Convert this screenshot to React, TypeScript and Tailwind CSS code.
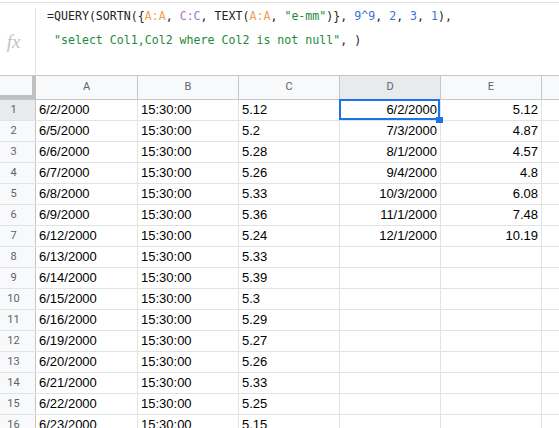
import React from "react";

const colA = [
  "6/2/2000", "6/5/2000", "6/6/2000", "6/7/2000", "6/8/2000", "6/9/2000", "6/12/2000", "6/13/2000",
  "6/14/2000", "6/15/2000", "6/16/2000", "6/19/2000", "6/20/2000", "6/21/2000", "6/22/2000", "6/23/2000",
];
const colC = ["5.12", "5.2", "5.28", "5.26", "5.33", "5.36", "5.24", "5.33", "5.39", "5.3", "5.29", "5.27", "5.26", "5.33", "5.25", "5.15"];
const colD = ["6/2/2000", "7/3/2000", "8/1/2000", "9/4/2000", "10/3/2000", "11/1/2000", "12/1/2000"];
const colE = ["5.12", "4.87", "4.57", "4.8", "6.08", "7.48", "10.19"];

const cell = "h-full border-r border-[#e2e3e3] flex items-center px-[3px] whitespace-nowrap overflow-hidden";

const orange = "text-[#f0a050]";
const purple = "text-[#a874d6]";
const green = "text-[#1e8a3c]";
const blue = "text-[#3d6fd6]";

const line1: [string, string][] = [
  ["=QUERY(SORTN({", ""],
  ["A:A", orange],
  [", ", ""],
  ["C:C", purple],
  [", TEXT(", ""],
  ["A:A", orange],
  [", ", ""],
  ['"e-mm"', green],
  [")}, ", ""],
  ["9^9", blue],
  [", ", ""],
  ["2", blue],
  [", ", ""],
  ["3", blue],
  [", ", ""],
  ["1", blue],
  ["),", ""],
];
const line2: [string, string][] = [
  [" ", ""],
  ['"select Col1,Col2 where Col2 is not null"', green],
  [", )", ""],
];

function FormulaBar() {
  return (
    <div className="h-[75px] pt-[2px]">
      <div className="h-[73px] border-t border-[#e0e0e0] flex">
        <div className="w-[35px] flex items-center justify-center pr-[8px] pt-[6px]">
          <span className="text-[19px] italic text-[#c4c4c4]" style={{ fontFamily: '"Liberation Serif", serif' }}>
            fx
          </span>
        </div>
        <div className="w-px bg-[#e0e0e0] mt-[5px] mb-[1px]" />
        <div
          className="pl-[11px] pt-[1px] text-[11.6px] leading-[24px] whitespace-pre text-[#222]"
          style={{ fontFamily: '"DejaVu Sans Mono", monospace' }}
        >
          {[line1, line2].map((ln, k) => (
            <div key={k}>
              {ln.map(([t, c], j) => (
                <span key={j} className={c}>
                  {t}
                </span>
              ))}
            </div>
          ))}
        </div>
      </div>
    </div>
  );
}

function HeaderRow() {
  const cols = [
    { l: "A", w: "w-[102px]", on: false },
    { l: "B", w: "w-[101px]", on: false },
    { l: "C", w: "w-[101px]", on: false },
    { l: "D", w: "w-[101px]", on: true },
    { l: "E", w: "w-[101px]", on: false },
  ];
  return (
    <div className="h-[25px] flex border-t border-b border-[#c4c7c5] bg-[#f8f9fa] text-[11px] text-[#5f6368]" style={{ fontFamily: "Roboto, sans-serif" }}>
      <div className="w-[36px] h-full border-r-[4px] border-b-[4px] border-[#c0c0c0] bg-[#f8f9fa]" />
      {cols.map((c) => (
        <div
          key={c.l}
          className={`${c.w} h-full border-r border-[#c4c7c5] flex items-center justify-center ${c.on ? "bg-[#e8eaed]" : ""}`}
        >
          {c.l}
        </div>
      ))}
      <div className="flex-1" />
    </div>
  );
}

export default function App() {
  return (
    <div className="w-[559px] h-[428px] overflow-hidden bg-white">
      <FormulaBar />
      <HeaderRow />
      {colA.map((a, i) => (
        <div key={i} className="h-[21px] flex border-b border-[#e2e3e3] text-[13px] text-black" style={{ fontFamily: '"Liberation Sans", Arial, sans-serif' }}>
          <div
            className={`w-[36px] h-full border-r border-[#c4c7c5] flex items-center justify-center pr-[8px] text-[11px] text-[#5f6368] ${i === 0 ? "bg-[#e8eaed]" : "bg-[#f8f9fa]"}`}
            style={{ fontFamily: "Roboto, sans-serif" }}
          >
            {i + 1}
          </div>
          <div className={`w-[102px] ${cell}`}>{a}</div>
          <div className={`w-[101px] ${cell}`}>15:30:00</div>
          <div className={`w-[101px] ${cell}`}>{colC[i]}</div>
          <div className={`w-[101px] ${cell} justify-end relative overflow-visible`}>
            {colD[i] ?? ""}
            {i === 0 && (
              <>
                <div className="absolute -top-px -left-px right-0 bottom-0 border-2 border-[#1a73e8] z-10" />
                <div className="absolute right-[-3px] bottom-[-3px] w-[7px] h-[6px] bg-[#1a73e8] z-10" />
              </>
            )}
          </div>
          <div className={`w-[101px] ${cell} justify-end`}>{colE[i] ?? ""}</div>
          <div className="flex-1" />
        </div>
      ))}
    </div>
  );
}
